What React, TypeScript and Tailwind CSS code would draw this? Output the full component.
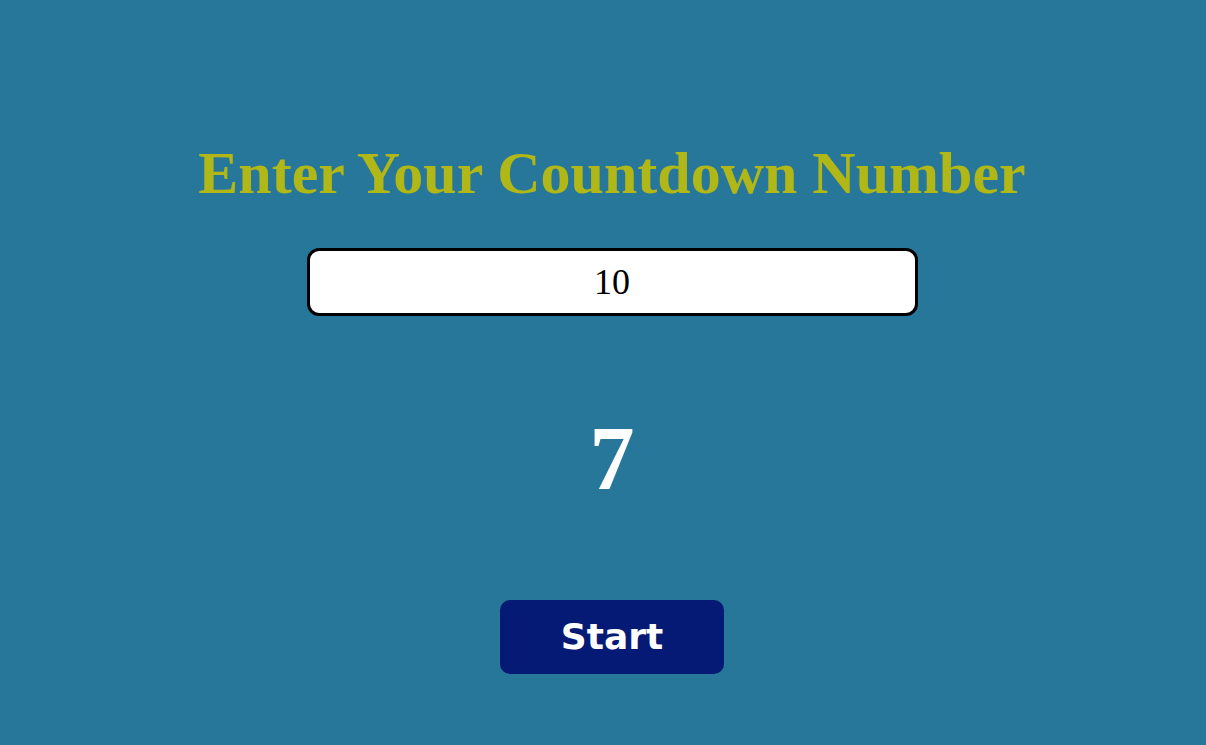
import { useState } from "react";

export default function App() {
  const [value, setValue] = useState("10");

  return (
    <div className="min-h-[745px] w-full bg-[#26779a] flex flex-col items-center pt-[138px] pl-[18px]">
      <h1 className="font-['Liberation_Serif',serif] font-bold text-[60px] leading-[70px] text-[#b0b716]">
        Enter Your Countdown Number
      </h1>
      <input
        type="text"
        value={value}
        onChange={(e) => setValue(e.target.value)}
        className="mt-[40px] w-[611px] h-[68px] bg-white border-[3px] border-black rounded-[12px] text-center text-[36px] font-['Liberation_Serif',serif] text-black outline-none"
      />
      <div className="mt-[93px] font-['Liberation_Serif',serif] font-bold text-[90px] leading-[100px] text-white">
        7
      </div>
      <button className="mt-[91px] w-[224px] h-[74px] bg-[#041a75] rounded-[10px] text-white font-['DejaVu_Sans',sans-serif] font-bold text-[36px]">
        Start
      </button>
    </div>
  );
}
